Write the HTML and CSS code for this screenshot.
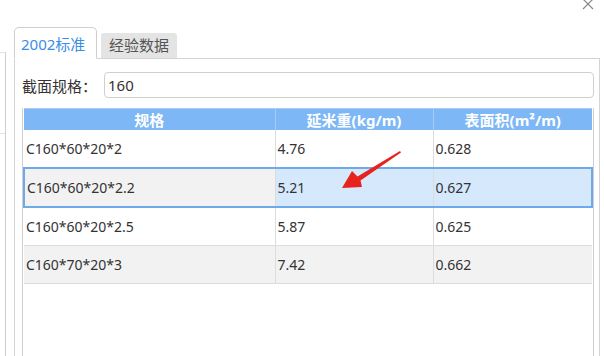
FILE: index.html
```html
<!DOCTYPE html>
<html>
<head>
<meta charset="utf-8">
<link rel="stylesheet" href="styles.css">
</head>
<body>

<div class="page">
    <div class="side">
        <div class="side-row"></div>
    </div>

    <div class="dialog">
        <div class="titlebar">
            <svg class="close-btn" width="12" height="12" viewBox="0 0 12 12">
                <path d="M1 1 L11 11 M11 1 L1 11" stroke="#8a8a8a" stroke-width="1.2" fill="none"/>
            </svg>
        </div>

        <div class="tabs">
            <div class="tab active">2002标准</div>
            <div class="tab">经验数据</div>
        </div>

        <div class="panel">
            <div class="search-row">
                <label class="search-label">截面规格：</label>
                <input type="text" class="search-input" value="160">
            </div>

            <div class="grid-wrap">
                <table class="grid">
                    <colgroup>
                        <col class="col-spec">
                        <col class="col-weight">
                        <col class="col-area">
                    </colgroup>
                    <thead>
                        <tr>
                            <th>规格</th>
                            <th>延米重(kg/m)</th>
                            <th>表面积(m²/m)</th>
                        </tr>
                    </thead>
                    <tbody>
                        <tr>
                            <td>C160*60*20*2</td>
                            <td>4.76</td>
                            <td>0.628</td>
                        </tr>
                        <tr class="alt selected">
                            <td>C160*60*20*2.2</td>
                            <td>5.21</td>
                            <td>0.627</td>
                        </tr>
                        <tr>
                            <td>C160*60*20*2.5</td>
                            <td>5.87</td>
                            <td>0.625</td>
                        </tr>
                        <tr class="alt">
                            <td>C160*70*20*3</td>
                            <td>7.42</td>
                            <td>0.662</td>
                        </tr>
                    </tbody>
                </table>
            </div>
        </div>
    </div>
</div>

<!-- annotation arrow drawn over the grid -->
<svg class="mark-arrow" width="70" height="50" viewBox="0 0 70 50">
    <polygon points="60,4 61,5.5 20.5,33.5 22,40 2,41 12,24 17.5,29.5" fill="#e8231e"/>
</svg>

</body>
</html>
```

FILE: styles.css
```css
body {
    margin: 0;
    background: #fff;
    color: #333;
    font-family: "Noto Sans", "Noto Sans CJK SC", sans-serif;
    font-size: 14px;
    overflow: hidden;
}

.page {
    display: flex;
    height: 356px;
}

.side {
    width: 5px;
    margin-top: 52px;
    border-top: 1px solid #e2e2e2;
    border-right: 1px solid #cfcfcf;
}

.side-row {
    height: 80px;
    border-bottom: 1px solid #e2e2e2;
}

.dialog {
    flex: 1;
    margin-left: 8px;
    padding-right: 4px;
    display: flex;
    flex-direction: column;
}

.titlebar {
    height: 28px;
    display: flex;
    justify-content: flex-end;
}

.close-btn {
    margin-top: -2px;
    margin-right: 6px;
}

.tabs {
    display: flex;
    align-items: flex-end;
    gap: 4px;
    height: 31px;
    margin-bottom: -1px;
    position: relative;
    z-index: 1;
}

.tab {
    height: 25px;
    width: 68px;
    padding: 0 4px;
    background: #e4e4e4;
    border-radius: 3px 3px 0 0;
    color: #555;
    font-size: 15px;
    line-height: 25px;
    text-align: center;
    border-bottom: 1px solid #d4d4d4;
}

.tab.active {
    height: 30px;
    width: 69px;
    padding: 0 6px;
    background: #fff;
    color: #3a8ee6;
    border: 1px solid #cfcfcf;
    border-bottom: 1px solid #fff;
    border-radius: 5px 5px 0 0;
    line-height: 32px;
    text-align: left;
}

.panel {
    flex: 1;
    border: 1px solid #d4d4d4;
    border-bottom: none;
    padding: 13px 5px 0 7px;
    display: flex;
    flex-direction: column;
}

.search-row {
    display: flex;
    align-items: center;
    height: 26px;
    margin-bottom: 10px;
}

.search-label {
    width: 82px;
    font-size: 15px;
    color: #333;
}

.search-input {
    flex: 1;
    height: 26px;
    box-sizing: border-box;
    border: 1px solid #d0d0d0;
    border-radius: 4px;
    padding: 0 3px;
    font-family: inherit;
    font-size: 15px;
    color: #333;
    outline: none;
}

.grid-wrap {
    flex: 1;
    border-left: 1px solid #cfcfcf;
    border-right: 1px solid #cfcfcf;
}

.grid {
    width: 100%;
    border-collapse: collapse;
    table-layout: fixed;
}

.col-spec {
    width: 251px;
}

.col-weight {
    width: 158px;
}

.grid th {
    height: 21px;
    padding: 0;
    background: #7db7f5;
    color: #fff;
    font-weight: bold;
    font-size: 15px;
    line-height: 20px;
    text-align: center;
    border-left: 1px solid #a3ccf7;
    border-top: 1px solid #a9cdf3;
}

.grid th:first-child {
    border-left: none;
}

.grid td {
    height: 37px;
    padding: 0 0 0 2px;
    border-bottom: 1px solid #dcdcdc;
    border-left: 1px solid #dcdcdc;
    background: #fff;
    white-space: nowrap;
}

.grid td:first-child {
    border-left: none;
}

.grid tr.alt td {
    background: #f2f2f2;
}

.grid tr.selected td {
    border-top: 2px solid #6ea9e9;
    border-bottom: 2px solid #6ea9e9;
    background: #d5e8fc;
}

.grid tr.selected td:first-child {
    background: #f2f2f2;
    border-left: 2px solid #6ea9e9;
}

.grid tr.selected td:last-child {
    border-right: 2px solid #6ea9e9;
}

.mark-arrow {
    position: absolute;
    left: 340px;
    top: 147px;
}
```
